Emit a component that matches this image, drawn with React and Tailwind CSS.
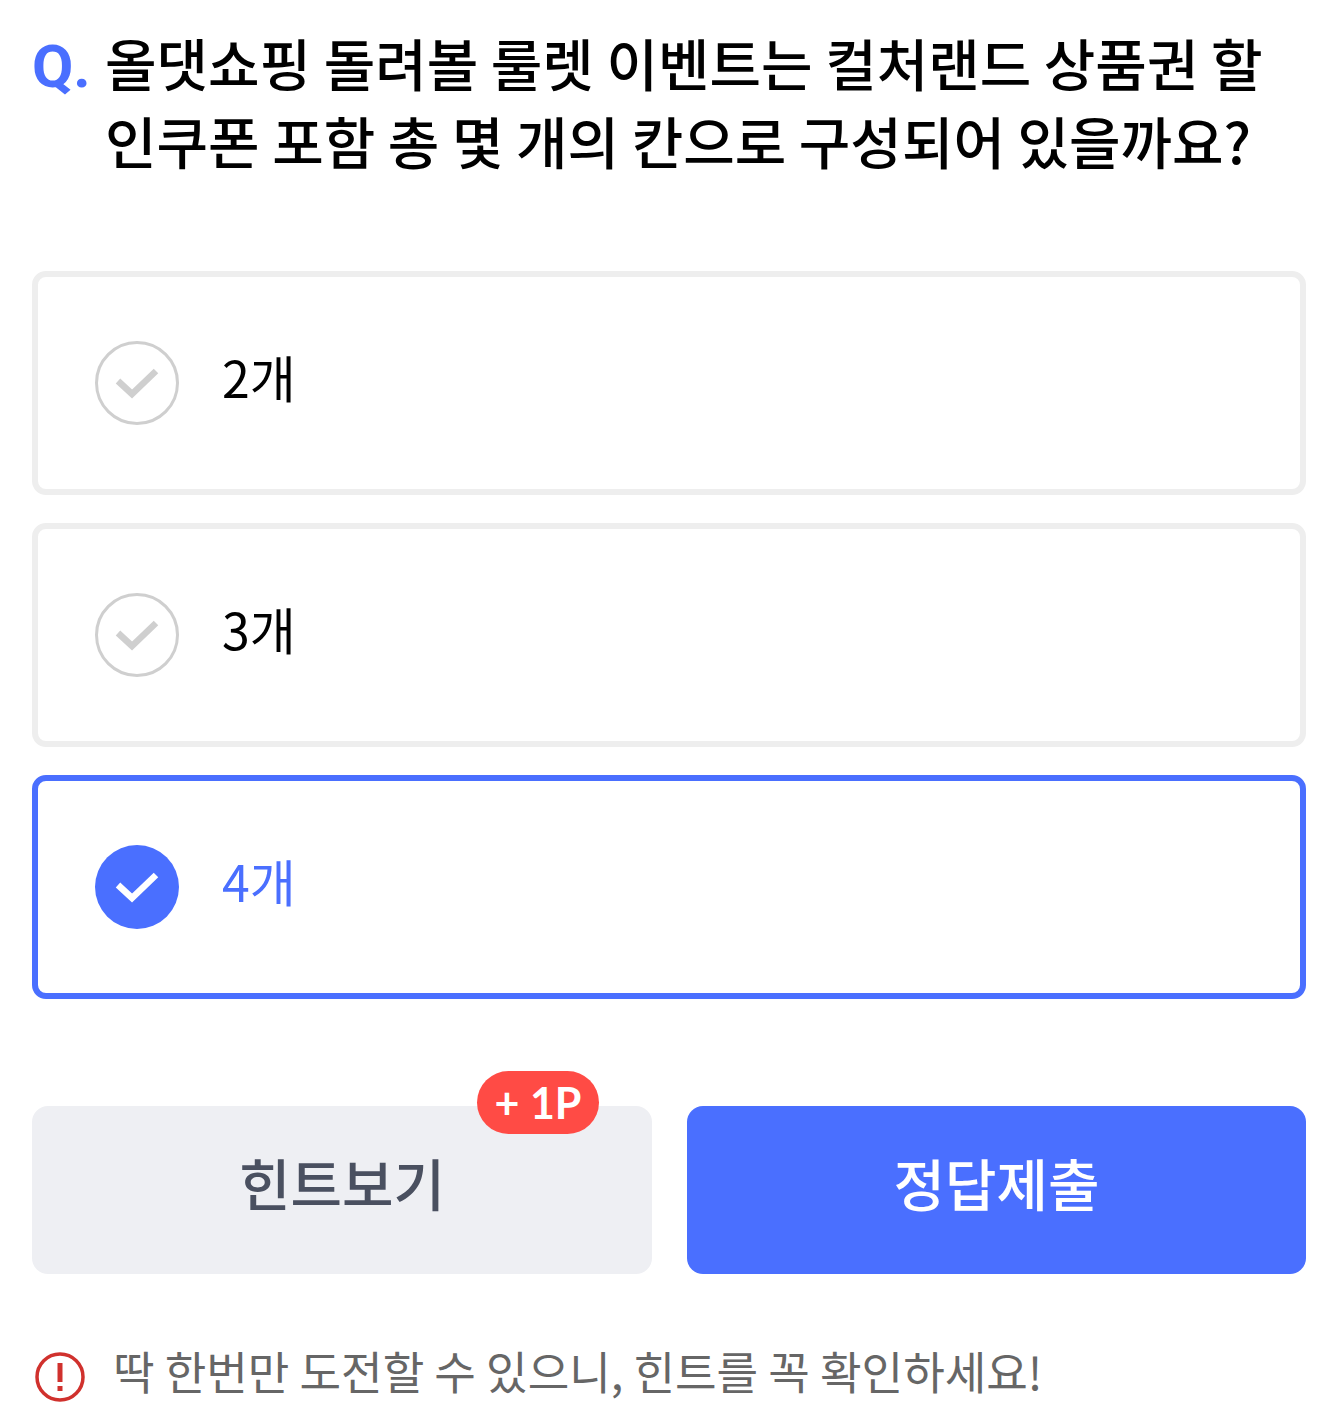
const font = { kr: "font-['Noto_Sans_CJK_KR',sans-serif]" };

const options = [
  { id: 1, label: "2개" },
  { id: 2, label: "3개" },
  { id: 3, label: "4개", selected: true },
];

const CheckMark = ({ color }) => (
  <svg width="44" height="32" viewBox="0 0 44 32" fill="none">
    <path d="M3 14 L17 27 L41 4" stroke={color} strokeWidth="6.5" />
  </svg>
);

const Option = ({ label, selected }) => (
  <div
    className={`flex h-[224px] items-center rounded-[14px] border-[6px] bg-white pl-[57px] ${
      selected ? "border-[#4a6fff]" : "border-[#eeeeee]"
    }`}
  >
    {selected ? (
      <div className="flex h-[84px] w-[84px] items-center justify-center rounded-full bg-[#4a6fff]">
        <CheckMark color="#ffffff" />
      </div>
    ) : (
      <div className="flex h-[84px] w-[84px] items-center justify-center rounded-full border-[3px] border-[#cfcfcf]">
        <CheckMark color="#cfcfcf" />
      </div>
    )}
    <span
      className={`ml-[43px] -mt-[14px] text-[50px] leading-none font-normal ${
        selected ? "text-[#4a6fff]" : "text-black"
      }`}
    >
      {label}
    </span>
  </div>
);

const App = () => {
  return (
    <div className={`h-[1414px] w-[1335px] overflow-hidden bg-white pr-[29px] pl-[32px] ${font.kr}`}>
      {/* Question */}
      <div className="flex pt-[23px] text-[56px] leading-[78px] font-medium text-black">
        <span className="h-[78px] w-[73px] shrink-0 pt-[5px] font-['Roboto',sans-serif] text-[60px] font-bold text-[#4a6fff]">
          Q.
        </span>
        <p className="whitespace-nowrap">
          올댓쇼핑 돌려볼 룰렛 이벤트는 컬처랜드 상품권 할
          <br />
          인쿠폰 포함 총 몇 개의 칸으로 구성되어 있을까요?
        </p>
      </div>

      {/* Options */}
      <div className="mt-[92px] flex flex-col gap-[28px]">
        {options.map((o) => (
          <Option key={o.id} label={o.label} selected={o.selected} />
        ))}
      </div>

      {/* Buttons */}
      <div className="mt-[107px] flex gap-[35px]">
        <button className="relative flex h-[168px] w-[620px] items-center justify-center rounded-[16px] bg-[#eeeff3] pb-[16px] text-[56px] font-medium text-[#4a5060]">
          힌트보기
          <span className="absolute top-[-35px] left-[445px] flex h-[63px] w-[122px] items-center justify-center rounded-full bg-[#ff4b45] pt-[2px] font-['Lato',sans-serif] text-[43px] font-bold text-white">
            + 1P
          </span>
        </button>
        <button className="flex h-[168px] w-[619px] items-center justify-center rounded-[16px] bg-[#4a6fff] pb-[16px] text-[56px] font-medium text-white">
          정답제출
        </button>
      </div>

      {/* Notice */}
      <div className="mt-[72px] flex items-center">
        <svg width="50" height="50" viewBox="0 0 50 50" fill="none" className="ml-[3px] mt-[6px] shrink-0">
          <circle cx="25" cy="25" r="23" stroke="#d0312d" strokeWidth="3.5" />
          <path d="M25 11 V30" stroke="#d0312d" strokeWidth="5" />
          <rect x="22.5" y="34" width="5" height="5" fill="#d0312d" />
        </svg>
        <span className="ml-[28px] -mt-[6px] whitespace-nowrap text-[45.2px] leading-[60px] font-normal text-[#666666]">
          딱 한번만 도전할 수 있으니, 힌트를 꼭 확인하세요!
        </span>
      </div>
    </div>
  );
};

export default App;
